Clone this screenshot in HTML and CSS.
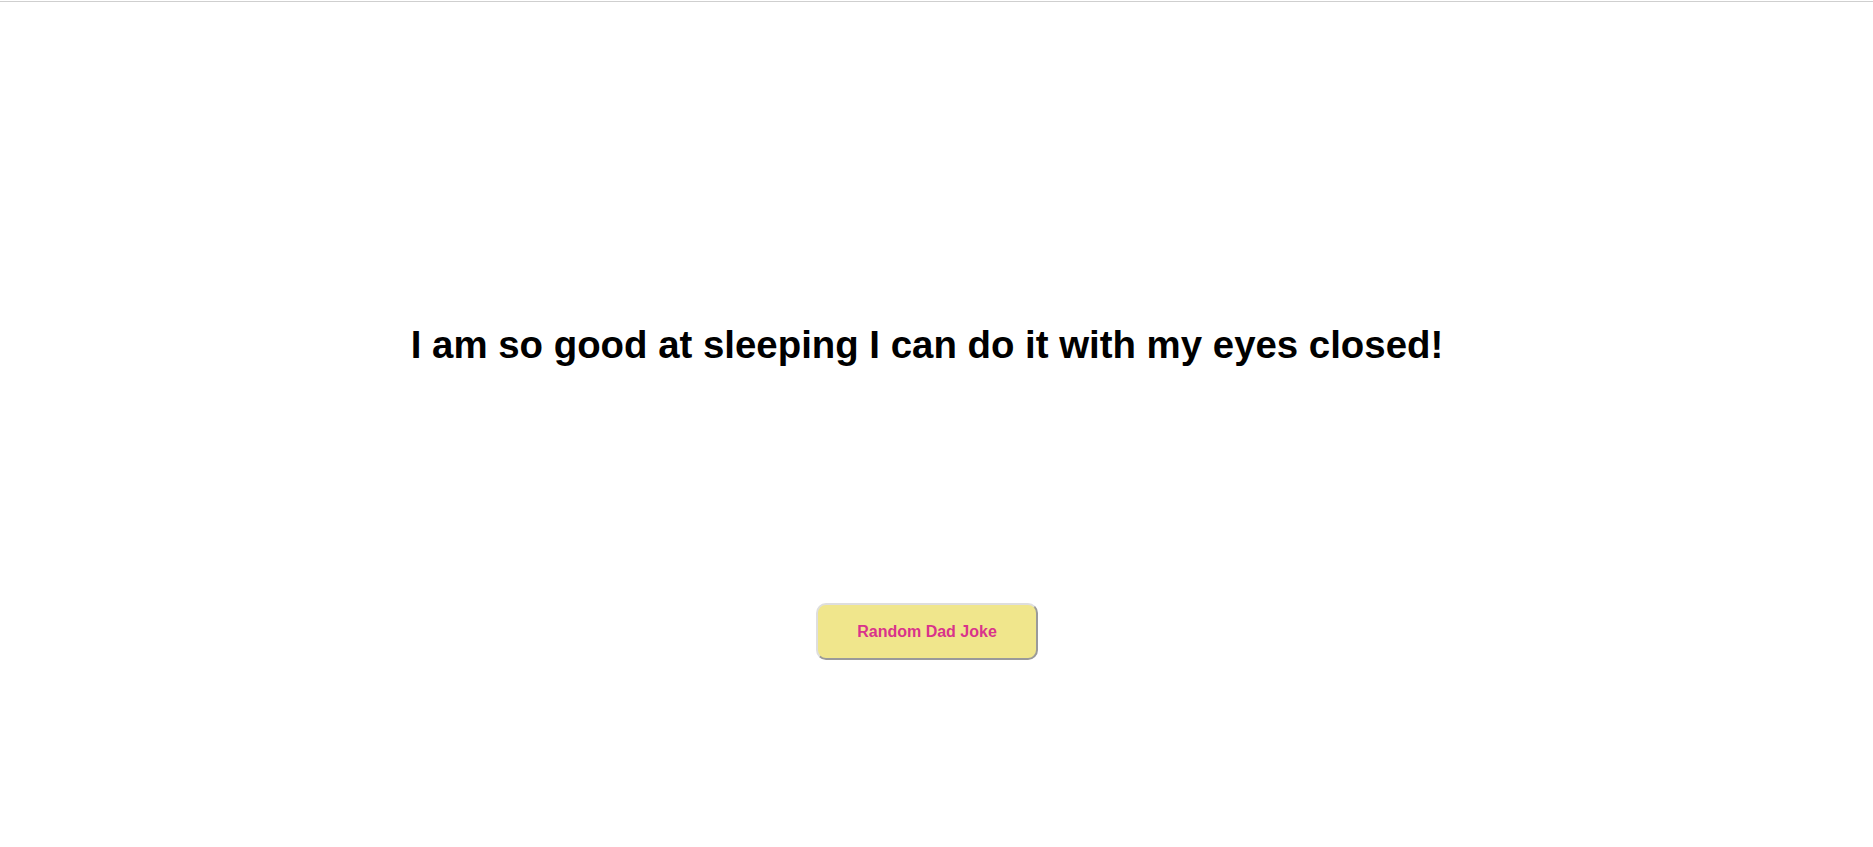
FILE: index.html
```html
<!DOCTYPE html>
<html>
<head>
<meta charset="utf-8">
<link rel="stylesheet" href="styles.css">
</head>
<body>
<div class="topline"></div>
<main class="page">
  <h1 class="joke">I am so good at sleeping I can do it with my eyes closed!</h1>
  <button class="btn">Random Dad Joke</button>
</main>
</body>
</html>
```
FILE: styles.css
```css
html, body {
  margin: 0;
  padding: 0;
  background: #ffffff;
}
body {
  font-family: "Liberation Sans", Arial, sans-serif;
}
.topline {
  height: 1px;
  margin-top: 1px;
  background: #cfcfcf;
}
.page {
  display: flex;
  flex-direction: column;
  align-items: center;
  padding-right: 19px;
}
.joke {
  margin: 319px 0 0 0;
  font-size: 38.4px;
  line-height: 48px;
  font-weight: bold;
  color: #000;
}
.btn {
  margin-top: 234px;
  width: 222px;
  height: 57px;
  background: #f0e68c;
  color: #d9338b;
  font-family: "Liberation Sans", Arial, sans-serif;
  font-weight: bold;
  font-size: 16px;
  border-radius: 10px;
  border-width: 2px;
  border-style: solid;
  border-color: #dedede #9a9a9a #9a9a9a #dedede;
  cursor: pointer;
}
```
